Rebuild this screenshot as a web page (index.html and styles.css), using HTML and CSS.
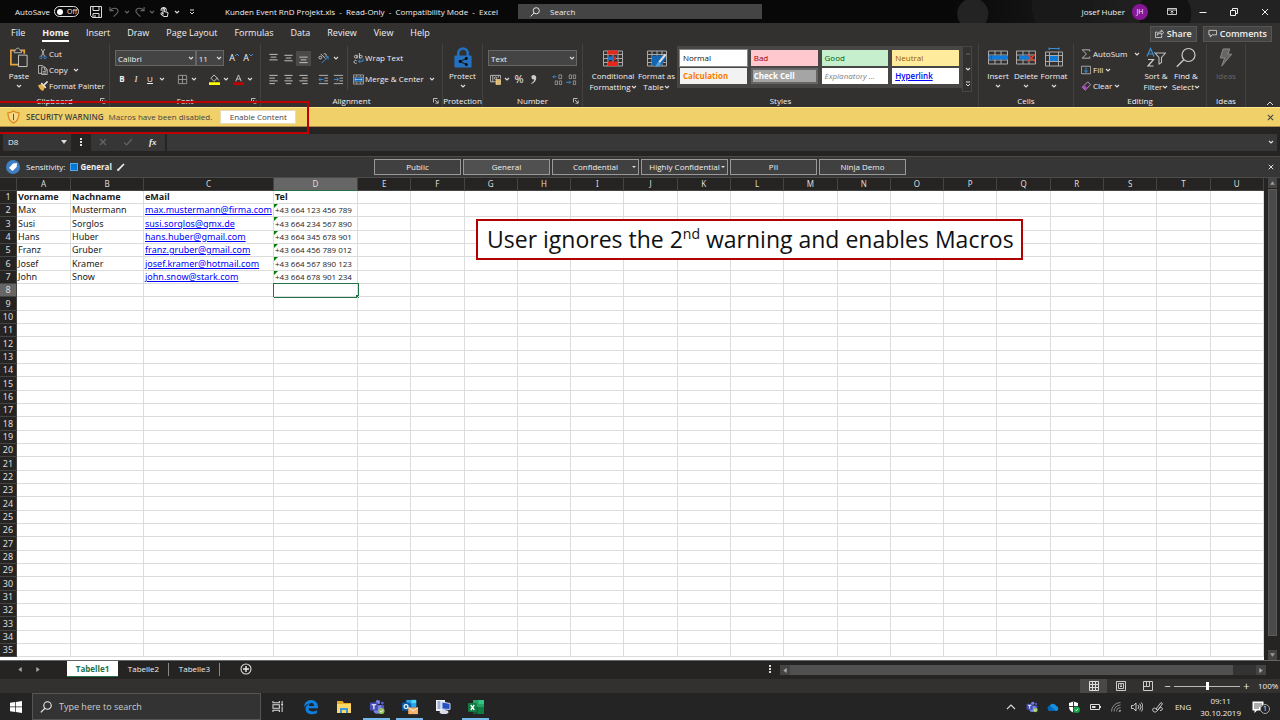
FILE: index.html
```html
<!DOCTYPE html>
<html lang="en">
<head>
<meta charset="utf-8">
<title>Kunden Event RnD Projekt.xls - Excel</title>
<link rel="stylesheet" href="styles.css">
</head>
<body>
<svg class="defs" aria-hidden="true">
  <symbol id="caret" viewBox="0 0 6 6"><path d="M1 2l2 2 2-2" fill="none" stroke="currentColor" stroke-width="1.100"/></symbol>
  <symbol id="launch" viewBox="0 0 6 6"><path d="M.5 4.500v-4h4M2 2l3 3M5.200 2.500v2.700H2.500" fill="none" stroke="currentColor" stroke-width=".9"/></symbol>
  <symbol id="glass" viewBox="0 0 12 12"><circle cx="7.500" cy="4.500" r="3.700" fill="none" stroke="currentColor" stroke-width="1.100"/><path d="M4.800 7.300L.8 11.300" stroke="currentColor" stroke-width="1.200"/></symbol>
  <symbol id="cross" viewBox="0 0 8 8"><path d="M1 1l6 6M7 1L1 7" stroke="currentColor" stroke-width="1.200"/></symbol>
  <symbol id="al-top" viewBox="0 0 12 12"><path d="M1.500 1.500h9M3 4.500h6M1.500 7.500h9" stroke="currentColor"/></symbol>
  <symbol id="al-mid" viewBox="0 0 12 12"><path d="M1.500 2.500h9M3 5.500h6M1.500 8.500h9" stroke="currentColor"/></symbol>
  <symbol id="al-bot" viewBox="0 0 12 12"><path d="M1.500 4.500h9M3 7.500h6M1.500 10.500h9" stroke="currentColor"/></symbol>
  <symbol id="teams" viewBox="0 0 18 18"><circle cx="10" cy="3.500" r="2.500" fill="#7b83eb"/><circle cx="15" cy="4.500" r="1.700" fill="#5059c9"/><path d="M12 7h5v5a3 3 0 0 1-4 2z" fill="#5059c9"/><path d="M5 7h9v5a4.500 4.500 0 0 1-9 0z" fill="#7b83eb"/><rect x="1" y="4" width="9" height="9" rx="1" fill="#464eb8"/><path d="M3 6.500h5M5.500 6.500v5" stroke="#fff" stroke-width="1.300"/><circle cx="14" cy="13.500" r="3.500" fill="#92c353"/><path d="M12.300 13.500l1.300 1.300 2.200-2.400" fill="none" stroke="#fff"/></symbol>
</svg>

<header class="titlebar">
  <div class="quick">
    <label class="autosave">AutoSave <span class="toggle"><input type="checkbox"><i></i>Off</span></label>
    <button class="qb save" aria-label="Save"><svg viewBox="0 0 12 12"><path d="M.5.5h11v11h-9l-2-2zM3 .5v4h6v-4M3 11.500v-4h6v4M5 9v2" fill="none" stroke="#ddd"/></svg></button>
    <button class="qb dim" aria-label="Undo"><svg viewBox="0 0 12 12"><path d="M1 1v4h4M1.300 4.700C4 1.500 9.500 1.500 10 5.500c.2 2-2.500 3.500-5 6" fill="none" stroke="currentColor" stroke-width="1.200"/></svg></button>
    <svg class="cv dim"><use href="#caret"/></svg>
    <button class="qb dim" aria-label="Redo"><svg viewBox="0 0 12 12"><path d="M11 1v4H7M10.700 4.700C8 1.500 2.500 1.500 2 5.500c-.2 2 2.500 3.500 5 6" fill="none" stroke="currentColor" stroke-width="1.200"/></svg></button>
    <svg class="cv dim"><use href="#caret"/></svg>
    <button class="qb" aria-label="Touch mode"><svg viewBox="0 0 12 12"><path d="M2.500 5.500a2.800 2.800 0 1 1 5.200 0M4.300 8V3.500c0-1.200 1.600-1.200 1.600 0V6l3 .8c.9.300 1 1 .8 1.800L9 11.500H5.500L2.300 8.800c-.5-.9.500-1.600 1.200-1.100L5 9" fill="none" stroke="#ddd" stroke-width="1.100"/></svg></button>
    <svg class="cv"><use href="#caret"/></svg>
    <button class="more" aria-label="Customize toolbar"><svg class="cv" viewBox="0 0 6 6"><path d="M1 1h4M1 3l2 2 2-2" fill="none" stroke="#ddd"/></svg></button>
  </div>
  <h1 class="doc">Kunden Event RnD Projekt.xls&nbsp; -&nbsp; Read-Only&nbsp; -&nbsp; Compatibility Mode&nbsp; -&nbsp; Excel</h1>
  <label class="search"><svg><use href="#glass"/></svg><input type="text" placeholder="Search" aria-label="Search"></label>
  <div class="account">
    <span>Josef Huber</span><span class="avatar">JH</span>
    <button aria-label="Ribbon display options"><svg viewBox="0 0 10 10"><path d="M.5 1.500h9v6h-9zM.5 3h9M5 7V4M3.500 5.500L5 4l1.500 1.500" fill="none" stroke="#ddd" stroke-width=".9"/></svg></button>
    <button aria-label="Minimize"><svg viewBox="0 0 10 10"><path d="M1.500 5.500h7" stroke="#eee"/></svg></button>
    <button aria-label="Restore"><svg viewBox="0 0 10 10"><path d="M1.500 3.500h5v5h-5zM3.500 3.500v-2h5v5h-2" fill="none" stroke="#eee"/></svg></button>
    <button aria-label="Close"><svg viewBox="0 0 10 10"><path d="M2 2l6 6M8 2L2 8" stroke="#eee"/></svg></button>
  </div>
</header>

<nav class="tabs">
  <a href="#">File</a><a href="#" class="on">Home</a><a href="#">Insert</a><a href="#">Draw</a><a href="#">Page Layout</a><a href="#">Formulas</a><a href="#">Data</a><a href="#">Review</a><a href="#">View</a><a href="#">Help</a>
  <div class="share">
    <button><svg viewBox="0 0 10 10"><path d="M3 3.500H.5v6h7V7M2.500 7c0-3 2-4 4.500-4V1l2.500 3L7 6.500v-2c-2 0-3.500.5-4.500 2.500z" fill="none" stroke="#ddd" stroke-width=".9"/></svg>Share</button>
    <button><svg viewBox="0 0 10 10"><path d="M1 1.500h8.500v5H4.500L2.500 9V6.500H1z" fill="none" stroke="#ddd" stroke-width=".9"/></svg>Comments</button>
  </div>
</nav>

<main class="ribbon">
  <section class="group clipboard">
    <div class="body">
      <button class="big paste"><svg viewBox="0 0 20 22"><path d="M6 3.500H1.500v15H9M12 3.500h3.500V7" fill="none" stroke="#e8a33d" stroke-width="1.800"/><path d="M5 6V3.500h1.500c0-3 4.500-3 4.500 0h1.500V6z" fill="#333130" stroke="#bbb"/><path d="M9.500 8.500h9v12h-9z" fill="#333130" stroke="#ccc"/></svg>Paste<svg class="cv"><use href="#caret"/></svg></button>
      <div class="stack">
        <button><svg viewBox="0 0 12 12"><path d="M4 0l4 9M8 0L4 9" stroke="#ccc"/><circle cx="3.500" cy="10" r="1.500" fill="none" stroke="#3a8fd6"/><circle cx="8.500" cy="10" r="1.500" fill="none" stroke="#3a8fd6"/></svg>Cut</button>
        <button><svg viewBox="0 0 12 12"><path d="M5 10H.5V.5h5L7 2M4.500 2.500h4l2.500 3v6H4.500zM8 2.500V6h3M6 8h3.500M6 9.800h3.500" fill="none" stroke="#ccc"/></svg>Copy<svg class="cv"><use href="#caret"/></svg></button>
        <button><svg viewBox="0 0 12 12"><path d="M0 5l4.500-1.500 4 4L6 12C3.500 11 1 8.500 0 5z" fill="#e8b04a"/><path d="M4 2.500l5.500 5.500" stroke="#eee" stroke-width="1.600"/><path d="M7 5l4.500-4.500" stroke="#ddd" stroke-width="2"/></svg>Format Painter</button>
      </div>
    </div>
    <h2>Clipboard</h2><svg class="launch"><use href="#launch"/></svg>
  </section>

  <section class="group font">
    <div class="rows">
      <div class="row">
        <select class="face" aria-label="Font"><option>Calibri</option></select><select class="size" aria-label="Font size"><option>11</option></select>
        <button class="ib grow" aria-label="Increase font size">A<svg viewBox="0 0 4 4"><path d="M0 3l2-2 2 2" fill="none" stroke="#3a8fd6"/></svg></button>
        <button class="ib grow" aria-label="Decrease font size">A<svg viewBox="0 0 4 4"><path d="M0 1l2 2 2-2" fill="none" stroke="#3a8fd6"/></svg></button>
      </div>
      <div class="row">
        <button class="ib"><b>B</b></button><button class="ib"><i class="it">I</i></button><button class="ib"><u>U</u></button><svg class="cv"><use href="#caret"/></svg>
        <span class="sep"></span>
        <button class="ib" aria-label="Borders"><svg viewBox="0 0 12 12"><path d="M1.500 1.500h9v9h-9zM6 1.500v9M1.500 6h9" fill="none" stroke="#999"/></svg></button><svg class="cv"><use href="#caret"/></svg>
        <span class="sep"></span>
        <button class="ib" aria-label="Fill colour"><svg viewBox="0 0 12 12"><path d="M5.500 1L2 4.500 5.500 8 9 4.500zM9 4.500l1.500 2.500" fill="none" stroke="#ccc"/><path d="M0 9h12v3H0z" fill="#ff0"/></svg></button><svg class="cv"><use href="#caret"/></svg>
        <button class="ib" aria-label="Font colour"><svg viewBox="0 0 12 12"><path d="M3 8l3-7 3 7M4 5.500h4" fill="none" stroke="#ccc"/><path d="M0 9h12v3H0z" fill="#c00000"/></svg></button><svg class="cv"><use href="#caret"/></svg>
      </div>
    </div>
    <h2>Font</h2><svg class="launch"><use href="#launch"/></svg>
  </section>

  <section class="group align">
    <div class="body">
      <div class="rows left">
        <div class="row">
          <button class="ib" aria-label="Top align"><svg><use href="#al-top"/></svg></button><button class="ib" aria-label="Middle align"><svg><use href="#al-mid"/></svg></button><button class="ib sel" aria-label="Bottom align"><svg><use href="#al-bot"/></svg></button>
          <span class="sep"></span>
          <button class="ib" aria-label="Orientation"><svg viewBox="0 0 12 12"><circle cx="2.500" cy="5" r="1.500" fill="none" stroke="#ccc"/><path d="M3 1l5 5M8 3.500a1.500 1.500 0 1 0-2-2" fill="none" stroke="#ccc"/><path d="M4 11l7-7M11 7V4H8" fill="none" stroke="#3a8fd6"/></svg></button><svg class="cv"><use href="#caret"/></svg>
        </div>
        <div class="row">
          <button class="ib" aria-label="Left"><svg viewBox="0 0 12 12"><path d="M1.500 1.500h9M1.500 4.500h6M1.500 7.500h9M1.500 10.500h6" stroke="#ccc"/></svg></button><button class="ib" aria-label="Center"><svg viewBox="0 0 12 12"><path d="M1.500 1.500h9M3 4.500h6M1.500 7.500h9M3 10.500h6" stroke="#ccc"/></svg></button><button class="ib" aria-label="Right"><svg viewBox="0 0 12 12"><path d="M1.500 1.500h9M4.500 4.500h6M1.500 7.500h9M4.500 10.500h6" stroke="#ccc"/></svg></button>
          <span class="sep"></span>
          <button class="ib" aria-label="Decrease indent"><svg viewBox="0 0 12 12"><path d="M1 1.500h10M7 4.500h4M7 7.500h4M1 10.500h10" stroke="#bbb"/><path d="M6 6H1M3 4L1 6l2 2" fill="none" stroke="#3a8fd6"/></svg></button><button class="ib" aria-label="Increase indent"><svg viewBox="0 0 12 12"><path d="M1 1.500h10M7 4.500h4M7 7.500h4M1 10.500h10" stroke="#bbb"/><path d="M1 6h5M4 4l2 2-2 2" fill="none" stroke="#3a8fd6"/></svg></button>
        </div>
      </div>
      <div class="rows right">
        <button class="row tx"><svg viewBox="0 0 12 12"><circle cx="3" cy="4" r="1.500" fill="none" stroke="#ccc"/><path d="M4.500 2v4M7 0v6M4 8.500a1.700 1.700 0 1 0 0 2.500" fill="none" stroke="#ccc"/><circle cx="8.500" cy="4" r="1.500" fill="none" stroke="#ccc"/><path d="M11 6v3H6M8 7L6 9l2 2" fill="none" stroke="#3a8fd6"/></svg>Wrap Text</button>
        <button class="row tx"><svg viewBox="0 0 12 12"><path d="M.5 1h11v10H.5zM.5 3.500h11M.5 8.500h11M4 1v2M8 1v2M4 9v2M8 9v2" fill="none" stroke="#aaa" stroke-width=".9"/><path d="M1 4h10v4H1z" fill="#1267b4"/><path d="M2 6h8M3.500 4.700L2 6l1.500 1.300M8.500 4.700L10 6 8.500 7.300" fill="none" stroke="#cde" stroke-width=".7"/></svg>Merge &amp; Center<svg class="cv"><use href="#caret"/></svg></button>
      </div>
    </div>
    <h2>Alignment</h2><svg class="launch"><use href="#launch"/></svg>
  </section>

  <section class="group protection">
    <div class="body center"><button class="big"><svg viewBox="0 0 20 22"><path d="M5 10V6.500a5 5 0 0 1 10 0V10" fill="none" stroke="#2471c1" stroke-width="2.600"/><rect x="1" y="9" width="18" height="12.500" rx="1" fill="#2471c1"/><path d="M13.500 12L7 15.200l6.500 3.200" fill="none" stroke="#222" stroke-width="1.300"/><circle cx="13.500" cy="12" r="1.500"/><circle cx="7" cy="15.200" r="1.500"/><circle cx="13.500" cy="18.400" r="1.500"/></svg>Protect<svg class="cv"><use href="#caret"/></svg></button></div>
    <h2>Protection</h2>
  </section>

  <section class="group number">
    <div class="rows">
      <div class="row"><select class="fmt" aria-label="Number format"><option>Text</option></select></div>
      <div class="row">
        <button class="ib" aria-label="Accounting format"><svg viewBox="0 0 12 12"><path d="M6 8.500H.5v-7h11V5M3 1.500v7M9 1.500V4" fill="none" stroke="#bbb"/><circle cx="6" cy="4.500" r="1.300" fill="none" stroke="#bbb"/><path d="M6.500 6h5v5.500h-5zM6.500 8h5M6.500 10h5" fill="#d9a950" stroke="#f3dba4" stroke-width=".7"/></svg></button><svg class="cv"><use href="#caret"/></svg>
        <button class="ib pct" aria-label="Percent">%</button><button class="ib" aria-label="Comma"><svg viewBox="0 0 12 12"><path d="M6 1a2.400 2.400 0 1 0 .8 4.700C6.500 8 5 9.200 3.500 10v1C7 9.800 9 7 9 4.200 9 2 7.700 1 6 1z" fill="#ccc"/></svg></button>
        <span class="sep wide"></span>
        <button class="ib" aria-label="Increase decimal"><svg viewBox="0 0 12 12"><path d="M5 3H1M2.500 1.500L1 3l1.500 1.500" fill="none" stroke="#3a8fd6"/><path d="M7.500 1h3v4h-3zM3.500 7.500h2.500v4H3.500zM8 7.500h2.500v4H8z" fill="none" stroke="#aaa" stroke-width=".8"/></svg></button>
        <button class="ib" aria-label="Decrease decimal"><svg viewBox="0 0 12 12"><path d="M0 9h5M3.500 7.500L5 9l-1.500 1.500" fill="none" stroke="#3a8fd6"/><path d="M3.500 1h2.500v4H3.500zM8 1h2.500v4H8zM8 7.500h2.500v4H8z" fill="none" stroke="#aaa" stroke-width=".8"/></svg></button>
      </div>
    </div>
    <h2>Number</h2><svg class="launch"><use href="#launch"/></svg>
  </section>

  <section class="group styles">
    <div class="body">
      <button class="big two"><svg viewBox="0 0 20 20"><path d="M.5 3.500h19v15H.5zM.5 7h19M.5 11h19M.5 15h19M5 3.500v15M10 3.500v15M15 3.500v15" fill="none" stroke="#aaa"/><path d="M5 3h10v4H5zM5 14h10v4.500H5z" fill="#e8261c"/><path d="M5 9h5v3.500H5z" fill="#1b74c8"/><path d="M10 9h3v3.500h-3z" fill="#e8261c"/></svg>Conditional<span>Formatting<svg class="cv"><use href="#caret"/></svg></span></button>
      <button class="big two"><svg viewBox="0 0 20 20"><path d="M.5 3.500h19v15H.5zM.5 7h19M.5 11h19M.5 15h19M5 3.500v15M10 3.500v15M15 3.500v15" fill="none" stroke="#aaa"/><path d="M5 8h14v3L14 18H5z" fill="#1267b4"/><path d="M18.500 7L12 15" stroke="#ddd" stroke-width="2"/><path d="M8 19c2-1 1-4 4-4.500l2 2c-.5 2.500-3.500 3-6 2.500z" fill="#4b9fe0"/></svg>Format as<span>Table<svg class="cv"><use href="#caret"/></svg></span></button>
      <div class="gallery">
        <button class="normal">Normal</button><button class="bad">Bad</button><button class="good">Good</button><button class="neutral">Neutral</button>
        <button class="calc">Calculation</button><button class="check">Check Cell</button><button class="expl">Explanatory ...</button><button class="hyper">Hyperlink</button>
      </div>
      <div class="gscroll"><button aria-label="Up"><svg class="cv dim" viewBox="0 0 6 6"><path d="M1 4l2-2 2 2" fill="none" stroke="currentColor"/></svg></button><button aria-label="Down"><svg class="cv"><use href="#caret"/></svg></button><button aria-label="More"><svg class="cv" viewBox="0 0 6 6"><path d="M1 1h4M1 3l2 2 2-2" fill="none" stroke="#ddd"/></svg></button></div>
    </div>
    <h2>Styles</h2>
  </section>

  <section class="group cells">
    <div class="body center">
      <button class="big"><svg viewBox="0 0 20 20"><path d="M.5 3.500h19v13H.5zM.5 7.500h19M.5 12.500h19M7 3.500v13M13 3.500v13" fill="none" stroke="#aaa"/><path d="M4 8h16v4H4z" fill="#0f7ad8"/><path d="M8 10H1M4 7l-3 3 3 3" fill="none" stroke="#0f7ad8" stroke-width="1.300"/></svg>Insert<svg class="cv"><use href="#caret"/></svg></button>
      <button class="big"><svg viewBox="0 0 20 20"><path d="M.5 3.500h19v13H.5zM.5 7.500h19M.5 12.500h19M7 3.500v13M13 3.500v13" fill="none" stroke="#aaa"/><path d="M3 8h10v4H3z" fill="#0f7ad8"/><path d="M11.500 7l7.500 7M19 7l-7.500 7" stroke="#e04030" stroke-width="1.400"/></svg>Delete<svg class="cv"><use href="#caret"/></svg></button>
      <button class="big"><svg viewBox="0 0 20 20"><path d="M1.500 4.500h17v14h-17zM1.500 8h17M1.500 14h17M5.500 4.500v14M14.500 4.500v14" fill="none" stroke="#aaa"/><path d="M6 8.500h8v5H6z" fill="#0f7ad8"/><path d="M5 1h10M5 0v2.500M15 0v2.500" stroke="#3a8fd6"/></svg>Format<svg class="cv"><use href="#caret"/></svg></button>
    </div>
    <h2>Cells</h2>
  </section>

  <section class="group editing">
    <div class="body">
      <div class="stack">
        <button><svg viewBox="0 0 12 12"><path d="M10.500 3V1h-9l5 5-5 5h9V9" fill="none" stroke="#ccc"/></svg>AutoSum<svg class="cv far"><use href="#caret"/></svg></button>
        <button><svg viewBox="0 0 12 12"><path d="M.5 1.500h11v9H.5z" fill="none" stroke="#bbb"/><path d="M6 3v6M3.800 6.500L6 9l2.200-2.500" fill="none" stroke="#3a8fd6" stroke-width="1.200"/></svg>Fill<svg class="cv near"><use href="#caret"/></svg></button>
        <button><svg viewBox="0 0 12 12"><path d="M8 1l3.500 3.500L5 11 1.500 7.500z" fill="#333130" stroke="#d8a8e6"/><path d="M4 5l3.500 3.500L5 11 1.500 7.500z" fill="#b146c2"/></svg>Clear<svg class="cv near"><use href="#caret"/></svg></button>
      </div>
      <button class="big two"><svg viewBox="0 0 20 20"><path d="M1 9l3.500-8L8 9M2.200 6.500h4.600" fill="none" stroke="#3a8fd6" stroke-width="1.200"/><path d="M2 12h5.500L2 18.500h5.500" fill="none" stroke="#ccc" stroke-width="1.200"/><path d="M9 5.500h10.500L15.500 10v5l-2.500 1.500V10z" fill="none" stroke="#bbb" stroke-width="1.100"/></svg>Sort &amp;<span>Filter<svg class="cv"><use href="#caret"/></svg></span></button>
      <button class="big two"><svg viewBox="0 0 20 20"><circle cx="12.500" cy="7.500" r="6.500" fill="none" stroke="#ccc" stroke-width="1.200"/><path d="M7.800 12.200L.8 19.200" stroke="#ccc" stroke-width="1.300"/></svg>Find &amp;<span>Select<svg class="cv"><use href="#caret"/></svg></span></button>
    </div>
    <h2>Editing</h2>
  </section>

  <section class="group ideas">
    <div class="body center"><button class="big" disabled><svg viewBox="0 0 20 22"><path d="M7 2h7l-2 5.500h4L5.500 20l3-8.500H4z" fill="#666" stroke="#8a8a8a"/></svg>Ideas</button></div>
    <h2>Ideas</h2>
  </section>
  <div class="collapse"><button aria-label="Collapse ribbon"><svg viewBox="0 0 8 6"><path d="M1 5l3-3 3 3" fill="none" stroke="#ddd"/></svg></button></div>
</main>

<div class="warnwrap">
  <div class="warning" role="alert">
    <svg class="shield" viewBox="0 0 14 15"><path d="M7 1C5 2.500 3 3 1 3c0 6 1.500 9 6 11 4.500-2 6-5 6-11-2 0-4-.5-6-2z" fill="#f5d98a" stroke="#dd8a1c" stroke-width="1.400"/><path d="M7 4v7" stroke="#555" stroke-width="1.100"/></svg>
    <strong>SECURITY WARNING</strong><span>Macros have been disabled.</span><button class="enable">Enable Content</button>
    <button class="close" aria-label="Close warning"><svg><use href="#cross"/></svg></button>
  </div>
  <div class="mark"></div>
</div>

<div class="formula">
  <button class="namebox">D8<svg viewBox="0 0 6 4"><path d="M0 0h6L3 4z" fill="#ddd"/></svg></button>
  <svg class="dots" viewBox="0 0 2 10"><path d="M0 1h2v2H0zM0 4h2v2H0zM0 7h2v2H0z" fill="#ddd"/></svg>
  <div class="fxs"><button aria-label="Cancel"><svg class="dim"><use href="#cross"/></svg></button><button aria-label="Enter"><svg class="dim" viewBox="0 0 8 8"><path d="M0 4.500L2.500 7 8 1" fill="none" stroke="currentColor" stroke-width="1.200"/></svg></button><button class="fx">fx</button></div>
  <label class="fin"><input type="text" aria-label="Formula"><svg class="cv"><use href="#caret"/></svg></label>
</div>

<div class="sens">
  <div class="label">
    <svg class="tag" viewBox="0 0 14 14"><circle cx="7" cy="7" r="7" fill="#3f7fc4"/><path d="M3 8l4-4.500 4-.5-.3 4L6.500 11z" fill="#fff"/></svg>
    Sensitivity:<i class="sq"></i><b>General</b>
    <svg class="pen" viewBox="0 0 8 8"><path d="M1.200 6.800L7 1" stroke="#eee" stroke-width="1.700"/><path d="M0 8l.6-2.500L2.500 7.400z" fill="#eee"/></svg>
  </div>
  <div class="levels">
    <button>Public</button><button class="cur">General</button><button>Confidential<i></i></button><button>Highly Confidential<i></i></button><button>PII</button><button>Ninja Demo</button>
  </div>
  <button class="close" aria-label="Close sensitivity bar"><svg><use href="#cross"/></svg></button>
</div>

<div class="sheet">
  <div class="grid"><table id="cells"></table>
    <p class="callout">User ignores the 2<sup>nd</sup> warning and enables Macros</p>
  </div>
  <div class="vscroll"><button aria-label="Scroll up"><svg viewBox="0 0 6 4"><path d="M0 4h6L3 0z" fill="#999"/></svg></button><i></i><button aria-label="Scroll down"><svg viewBox="0 0 6 4"><path d="M0 0h6L3 4z" fill="#999"/></svg></button></div>
</div>

<div class="sheettabs">
  <div class="arrows"><button aria-label="Previous sheet"><svg viewBox="0 0 4 6"><path d="M4 0v6L0 3z" fill="#aaa"/></svg></button><button aria-label="Next sheet"><svg viewBox="0 0 4 6"><path d="M0 0v6l4-3z" fill="#aaa"/></svg></button></div>
  <button class="st on">Tabelle1</button><button class="st">Tabelle2</button><button class="st">Tabelle3</button>
  <button class="add" aria-label="New sheet"><svg viewBox="0 0 12 12"><circle cx="6" cy="6" r="5" fill="none" stroke="#ddd" stroke-width="1.100"/><path d="M6 3v6M3 6h6" stroke="#eee" stroke-width="1.400"/></svg></button>
  <svg class="dots" viewBox="0 0 2 10"><path d="M0 1h2v2H0zM0 4h2v2H0zM0 7h2v2H0z" fill="#ddd"/></svg>
  <div class="hscroll"><button aria-label="Scroll left"><svg viewBox="0 0 4 6"><path d="M4 0v6L0 3z" fill="#aaa"/></svg></button><i></i><button aria-label="Scroll right"><svg viewBox="0 0 4 6"><path d="M0 0v6l4-3z" fill="#aaa"/></svg></button></div>
</div>

<div class="status">
  <button class="on" aria-label="Normal view"><svg viewBox="0 0 10 10"><path d="M.5.5h9v9h-9zM3.500.5v9M6.500.5v9M.5 3.500h9M.5 6.500h9" fill="none" stroke="#ddd"/></svg></button>
  <button aria-label="Page layout view"><svg viewBox="0 0 10 10"><path d="M.5.5h9v9h-9zM2.500 2.500h5v5h-5zM4 4h2M4 5.500h2" fill="none" stroke="#ccc"/></svg></button>
  <button aria-label="Page break view"><svg viewBox="0 0 10 10"><path d="M.5.5h9v9h-9zM3.500.5v5h3v-5M.5 5.500h3" fill="none" stroke="#ccc"/></svg></button>
  <span class="pm">−</span><input type="range" aria-label="Zoom" min="0" max="100" value="50"><span class="pm">+</span><span class="pct">100%</span>
</div>

<footer class="taskbar">
  <button class="start" aria-label="Start"><svg viewBox="0 0 12 12"><path d="M0 1.700L5.300 1v4.600H0zM6 .9L12 0v5.600H6zM0 6.300h5.300v4.600L0 10.200zM6 6.300h6V12l-6-.9z" fill="#fff"/></svg></button>
  <label class="tsearch"><svg><use href="#glass"/></svg><input type="text" placeholder="Type here to search" aria-label="Type here to search"></label>
  <button class="app" aria-label="Task view"><svg class="tv" viewBox="0 0 12 12"><path d="M.5 0v2h7V0M.5 4h7v4h-7zM.5 12v-2h7v2M10.500 0v3M10.500 6v6" fill="none" stroke="#ddd" stroke-width="1.100"/><path d="M9.500 3h2v2h-2z" fill="#ddd"/></svg></button>
  <button class="app" aria-label="Edge"><svg viewBox="0 0 16 16"><path d="M1 8C1.500 3 4.500 1 8 1c4.500 0 7 3 7 6.500V9.300H5.500C5.800 13 10.500 13.500 14 11.300v3C9 16.700 2.500 15 2.500 9.700 2.500 7.500 4 5.500 6.500 4.500 4.500 4.800 2.500 6 1 8zm4.700-1.100h5.400C11.100 5 10 4 8.400 4 6.800 4 5.900 5.300 5.700 6.900z" fill="#0c7fe0"/></svg></button>
  <button class="app" aria-label="File Explorer"><svg viewBox="0 0 16 16"><path d="M1 2h5.500L8 4h7v10H1z" fill="#e9a92b"/><path d="M1 5h14v9H1z" fill="#ffd869"/><path d="M4 14V9h8v5h-2v-3H6v3z" fill="#3a9ae0"/></svg></button>
  <button class="app run" aria-label="Teams"><svg><use href="#teams"/></svg></button>
  <button class="app run" aria-label="Outlook"><svg viewBox="0 0 18 18"><path d="M5 1h11v12H5z" fill="#1066b5"/><path d="M5 1h5.500v4H5zM10.500 5H16v4h-5.500z" fill="#28a8ea"/><path d="M10.500 1H16v4h-5.500z" fill="#50d9ff"/><rect y="4" width="9" height="9" rx="1" fill="#0a5ca8"/><circle cx="4.500" cy="8.500" r="2.200" fill="none" stroke="#fff" stroke-width="1.300"/><path d="M7 9.500h11V17H7z" fill="#f6b26b"/><path d="M7 9.500l5.500 4 5.500-4" fill="none" stroke="#fff" stroke-width=".8"/></svg></button>
  <button class="app" aria-label="Remote tool"><svg viewBox="0 0 16 16"><path d="M1 1h9v11H1z" fill="#eef2f8"/><path d="M2.500 3h3M2.500 5h3M2.500 7h3M2.500 9h3" stroke="#4b6cb0"/><path d="M7 3l8 1.500v6L7 10z" fill="#244fc0" stroke="#c5d4ef"/><ellipse cx="9" cy="13" rx="4.500" ry="2" fill="#d8dde6"/></svg></button>
  <button class="app run" aria-label="Excel"><svg viewBox="0 0 16 16"><path d="M5 1h11v14H5z" fill="#21a366"/><path d="M5 8h5.500v7H5z" fill="#185c37"/><path d="M10.500 8H16v7h-5.500z" fill="#107c41"/><path d="M10.500 1H16v4h-5.500z" fill="#33c481"/><rect y="4" width="9" height="9" rx="1" fill="#107c41"/><path d="M2.700 6l3.600 5M6.300 6l-3.600 5" stroke="#fff" stroke-width="1.300"/></svg></button>
  <div class="tray">
    <svg viewBox="0 0 12 12"><path d="M2 8l4-4 4 4" fill="none" stroke="#ddd" stroke-width="1.100"/></svg>
    <svg><use href="#teams"/></svg>
    <svg viewBox="0 0 12 12"><path d="M3 10a2.700 2.700 0 0 1-.3-5.300A3.600 3.600 0 0 1 9.300 5 2.600 2.600 0 0 1 9.500 10z" fill="#1490df"/><path d="M3 10a2.700 2.700 0 0 1-.3-5.300L9 10z" fill="#0364b8"/></svg>
    <svg viewBox="0 0 12 12"><path d="M5.500.5L10 2v4c0 3-2 4.500-4.500 5.500C3 10.500 1 9 1 6V2z" fill="#fff"/><path d="M5.500.5v11M1 5.500h9" stroke="#333"/><circle cx="8.700" cy="8.700" r="3.200" fill="#16a34a"/><path d="M7.300 8.700l1 1 1.800-2" fill="none" stroke="#fff" stroke-width=".9"/></svg>
    <svg viewBox="0 0 12 12"><path d="M1.500 3.500h9v5h-9z" fill="none" stroke="#ddd"/><path d="M3 5h3.500v2H3zM11 5h1v2h-1z" fill="#ddd"/></svg>
    <svg viewBox="0 0 12 12"><path d="M10.500 1.500a9 9 0 0 0-9 9M10.500 4a6.500 6.500 0 0 0-6.500 6.500M10.500 6.500a4 4 0 0 0-4 4" fill="none" stroke="#888"/><path d="M10.500 8.500v2h-2z" fill="#eee"/></svg>
    <svg viewBox="0 0 12 12"><path d="M.5 4.500h2L5 2v8L2.500 7.500h-2zM7 4a3 3 0 0 1 0 4M8.700 2.700a5 5 0 0 1 0 6.600M10.300 1.500a7 7 0 0 1 0 9" fill="none" stroke="#ddd" stroke-width=".9"/></svg>
    <svg viewBox="0 0 12 12"><path d="M4 8l5-6.500 1.500 1.200L5.500 9.500zM4 8c-3-3-5 2-1.500 3 3.500.5 3-4 6-4.500 3-.3 2 3.500-.5 3" fill="none" stroke="#ddd" stroke-width=".9"/></svg>
    <span>ENG</span>
    <time><span>09:11</span><span>30.10.2019</span></time>
    <span class="notif"><svg viewBox="0 0 12 12"><path d="M.5.500h11v9H5L2.500 12V9.500h-2z" fill="#fff"/><path d="M2 3h8M2 5h8M2 7h5" stroke="#333" stroke-width=".8"/></svg><em>1</em></span>
  </div>
</footer>
<script src="sheet.js"></script>
</body>
</html>
```
FILE: styles.css
```css
* { box-sizing: border-box; }
body { margin: 0; height: 100vh; display: flex; flex-direction: column; overflow: hidden; background: #252423; color: #f0f0f0; font: 8px/12px "Open Sans", "Noto Sans", sans-serif; }
button, input, select { font: inherit; color: inherit; background: none; border: 0; padding: 0; margin: 0; border-radius: 0; }
button { display: flex; align-items: center; justify-content: center; white-space: nowrap; }
h1, h2, p { margin: 0; font: inherit; }
svg { flex: none; display: block; width: 12px; height: 12px; }
.defs { display: none; }
.cv { width: 6px; height: 6px; margin: 0 2px; color: #ddd; }
.dim { color: #666; }

.titlebar { height: 23px; flex: none; display: grid; grid-template-columns: 1fr 244px 1fr; grid-template-areas: "quick search account"; align-items: center; position: relative; background: radial-gradient(circle at 76% 60%, #242323 15px, transparent 16px), radial-gradient(circle at 83% 30%, #1a1919 30px, transparent 31px), radial-gradient(circle at 91% 60%, #141313 26px, transparent 27px), linear-gradient(90deg, #080808 74%, #232222 90%); }
.quick { display: flex; align-items: center; padding-left: 15px; grid-area: quick; }
.autosave, .toggle { display: flex; align-items: center; }
.autosave { width: 73px; gap: 4px; }
.toggle { width: 25px; height: 11px; flex: none; border: 1px solid #ddd; border-radius: 6px; font-size: 7px; gap: 4px; padding-left: 2px; }
.toggle input { position: absolute; opacity: 0; width: 1px; height: 1px; }
.toggle i { width: 6px; height: 6px; border-radius: 3px; background: #fff; }
.qb { width: 15px; }
.qb svg { width: 11px; height: 11px; }
.qb.save svg { width: 12px; height: 12px; }
.qb.save { margin-right: 4px; }
.more { margin-left: 5px; }
.doc { position: absolute; left: 225px; white-space: nowrap; }
.search { grid-area: search; height: 15px; background: #444; display: flex; align-items: center; padding: 0 12px; gap: 10px; }
.search svg { width: 10px; height: 10px; }
.search input, .tsearch input { flex: 1; min-width: 0; outline: 0; }
.search input::placeholder { color: #eee; opacity: 1; }
.account { grid-area: account; display: flex; align-items: center; justify-content: flex-end; }
.avatar { width: 16px; height: 16px; border-radius: 8px; background: #881798; text-align: center; line-height: 16px; margin: 0 8px 0 7px; font-size: 7px; }
.account button { width: 31px; }
.account button svg { width: 10px; height: 10px; }

.tabs { height: 21px; flex: none; display: flex; align-items: center; gap: 17px; padding: 0 8px 0 11px; background: #333130; font-size: 9px; }
.tabs a { color: #f0f0f0; text-decoration: none; line-height: 14px; border-bottom: 2px solid transparent; }
.tabs a.on { font-weight: 700; border-color: #fff; }
.share { margin-left: auto; display: flex; gap: 6px; font-weight: 600; }
.share button { height: 16px; background: #444; border: 1px solid #555; gap: 3px; padding: 0 4px; }
.share svg { width: 9px; height: 9px; }

.ribbon { height: 63px; flex: none; display: flex; background: #333130; }
.group { position: relative; flex: none; display: flex; flex-direction: column; border-right: 1px solid #444240; padding-top: 2px; }
.group h2 { margin-top: auto; text-align: center; height: 12px; }
.launch { position: absolute; right: 3px; bottom: 3px; width: 6px; height: 6px; color: #ccc; }
.body { display: flex; }
.center { justify-content: center; }
.big { flex-direction: column; justify-content: flex-start; width: 28px; line-height: 11px; }
.big > svg:first-child { width: 20px; height: 21px; margin: 1px 0 2px; }
.big > .cv { margin-top: 2px; }
.big span { display: flex; align-items: center; }
.big span .cv { margin: 0; }
.big:disabled { color: #666; }
.stack button { height: 16px; gap: 2px; }
.stack svg:first-child { width: 10px; height: 10px; }
.stack .cv { margin-left: 4px; }
.rows { display: flex; flex-direction: column; gap: 5px; padding: 4px 5px 0; }
.row { display: flex; align-items: center; justify-content: flex-start; height: 16px; }
.ib { width: 14px; height: 15px; flex: none; }
.ib svg { width: 11px; height: 11px; color: #ccc; }
.sep { width: 1px; height: 13px; background: #484644; margin: 0 4px; }
.it { font-family: "Liberation Serif", serif; font-size: 9px; }
select { appearance: none; height: 16px; border: 1px solid #666; background: #444 url("data:image/svg+xml,%3Csvg xmlns='http://www.w3.org/2000/svg' viewBox='0 0 6 6'%3E%3Cpath d='M1 2l2 2 2-2' fill='none' stroke='%23ddd' stroke-width='1.1'/%3E%3C/svg%3E") no-repeat right 1px center / 6px 6px; padding: 0 2px; line-height: 13px; }
.face { width: 83px; } .size { width: 29px; margin-right: 3px; } .fmt { width: 90px; }
.ib.grow { font-size: 9px; }
.ib.grow svg { width: 4px; height: 4px; margin-bottom: 6px; }
.clipboard { width: 110px; } .paste { width: 38px; }
.clipboard .stack button { gap: 1px; }
.font { width: 151px; }
.align { width: 182px; } .align .ib { width: 15px; }
.left { width: 87px; border-right: 1px solid #484644; padding-right: 0; height: 44px; }
.left .sep { margin: 0 2px; background: none; }
.right { padding-right: 0; }
.sel { background: #4c4a48; }
.tx { gap: 1px; }
.tx svg:first-child { width: 11px; height: 11px; }
.tx .cv { margin-left: 4px; }
.protection { width: 40px; } .protection .big { width: 38px; } .protection h2 { white-space: nowrap; }
.number { width: 100px; }
.number .pct { font-size: 11px; }
.number .wide { margin: 0 5px; }
.styles { flex: 1; min-width: 0; }
.styles .body { padding-left: 7px; }
.styles .two { width: 46px; }
.styles .two + .two { width: 41px; }
.gallery { flex: 1; display: grid; grid-template-columns: repeat(4, 1fr); grid-template-rows: 16px 16px; gap: 2px 4px; background: #484644; padding: 4px 3px; height: 42px; }
.gallery button { justify-content: flex-start; padding: 0 3px; background: #fff; color: #111; overflow: hidden; }
.gallery .normal { outline: 1px solid #888; }
.gallery .bad { background: #ffc7ce; color: #9c0006; }
.gallery .good { background: #c6efce; color: #006100; }
.gallery .neutral { background: #ffeb9c; color: #9c5700; }
.gallery .calc { background: #f2f2f2; color: #fa7d00; font-weight: 700; }
.gallery .check { background: #a5a5a5; color: #fff; font-weight: 700; border: 2px solid #666; padding: 0 1px; }
.gallery .expl { color: #7f7f7f; font-style: italic; }
.gallery .hyper { color: #0000ff; text-decoration: underline; font-weight: 600; }
.gscroll { width: 10px; margin-right: 6px; display: grid; grid-template-rows: repeat(3, 1fr); border: 1px solid #484644; }
.cells { width: 95px; } .cells .big { width: 28px; }
.editing { width: 133px; } .editing .body { padding-left: 7px; } .editing .stack { width: 60px; } .editing .two { width: 30px; }
.stack .far { margin-left: 5px; }
.stack .near { margin-left: 0; }
.ideas { width: 39px; }
.collapse { width: 34px; display: flex; align-items: flex-end; justify-content: flex-end; padding: 0 6px 1px 0; }
.collapse svg { width: 8px; height: 6px; }

.warnwrap { position: relative; flex: none; padding-bottom: 5px; }
.warning { height: 20px; display: flex; align-items: center; background: #f0d068; border-top: 1px solid #ffe48a; border-bottom: 1px solid #b08a48; color: #444; padding-left: 7px; }
.shield { width: 13px; height: 14px; margin-right: 6px; }
.warning strong { font-weight: 600; margin-right: 5px; }
.enable { margin-left: 8px; width: 76px; height: 14px; background: #fff; border: 1px solid #e6dcb8; }
.close { margin-left: auto; width: 20px; }
.close svg { width: 7px; height: 7px; }
.mark { position: absolute; left: 0; top: -6px; width: 309px; height: 33px; border: 2px solid #c00000; border-left: 0; }

.formula { flex: none; display: flex; align-items: center; height: 20px; padding: 0 3px; }
.namebox { width: 68px; height: 17px; background: #363636; justify-content: space-between; padding: 0 4px 0 5px; }
.namebox svg { width: 6px; height: 4px; }
.dots { width: 2px; height: 10px; margin: 0 9px; }
.fxs { display: flex; width: 74px; height: 17px; background: #363636; justify-content: space-around; }
.fxs svg { width: 8px; height: 8px; }
.fx { font: italic bold 9px "Liberation Serif", serif; }
.fin { flex: 1; display: flex; align-items: center; height: 17px; background: #383838; margin-left: 2px; padding-right: 1px; }
.fin input { flex: 1; outline: 0; min-width: 0; }

.sens { flex: none; display: grid; grid-template-columns: 1fr auto 1fr; align-items: center; height: 22px; margin-top: 4px; background: #363636; border: solid #4a4a4a; border-width: 1px 0; }
.label { display: flex; align-items: center; padding-left: 6px; }
.tag { width: 14px; height: 14px; margin-right: 6px; }
.sq { width: 8px; height: 8px; background: #0078d7; border: 1px solid #5aa9e6; margin: 0 2px 0 5px; }
.pen { width: 8px; height: 8px; margin-left: 5px; }
.levels { display: grid; grid-template-columns: repeat(6, 87px); gap: 2px; }
.levels button { position: relative; height: 16px; border: 1px solid #999; background: #404040; }
.levels .cur { background: #505050; }
.levels i { position: absolute; right: 2px; top: 6px; border: 2px solid transparent; border-top-color: #ddd; }
.sens .close { justify-self: end; width: 18px; }
.sens .close svg { width: 6px; height: 6px; }

.sheet { flex: 1; min-height: 0; display: flex; }
.grid { position: relative; flex: 1; min-width: 0; overflow: hidden; background: #fff; }
table { border-collapse: separate; border-spacing: 0; table-layout: fixed; width: 100%; color: #222; font-family: "Noto Sans", "Open Sans", sans-serif; font-size: 9px; line-height: 12px; }
th, td { padding: 0; height: 13px; white-space: nowrap; overflow: visible; border: solid #dcdcdc; border-width: 0 1px 1px 0; }
tr:nth-child(3n) td, tr:nth-child(3n) th { height: 14px; }
td { padding-left: 1px; text-align: left; position: relative; }
th { background: #252423; color: #ddd; font-weight: 400; border-color: #444; font-size: 8px; }
thead th { height: 13px; }
thead th.cur { background: #666; border-bottom-color: #217346; }
tbody th.cur { background: #666; }
tbody th { font-size: 9px; }
td a { color: #0000ff; }
td.tel { font-family: "Open Sans", sans-serif; font-size: 8px; }
td.tel::before { content: ""; position: absolute; left: 0; top: 0; border: 2px solid; border-color: #008000 transparent transparent #008000; }
td.active { outline: 1px solid #217346; }
td.active::after { content: ""; position: absolute; right: -2px; bottom: -2px; width: 3px; height: 3px; background: #217346; }
.w0 { width: 17px; } .w1 { width: 54px; } .w2 { width: 73px; } .w3 { width: 130px; } .w4 { width: 84px; }
.callout { position: absolute; left: 476px; top: 41px; height: 41px; padding: 0 7px 0 9px; border: 2px solid #b00000; background: #fff; color: #111; font-size: 23px; line-height: 37px; white-space: nowrap; }
.callout sup { font-size: 14px; line-height: 0; }
.vscroll { width: 16px; padding: 0 3px 0 4px; display: flex; flex-direction: column; }
.vscroll button { height: 10px; background: #444; }
.vscroll svg { width: 5px; height: 4px; }
.vscroll i { flex: 1; background: #4a4a4a; margin: 1px 0 14px; border: 1px solid #5a5a5a; }

.sheettabs { flex: none; height: 19px; display: flex; align-items: flex-start; border-top: 1px solid #666; }
.arrows { display: flex; width: 67px; padding-left: 16px; gap: 10px; height: 17px; }
.arrows button { width: 8px; } .arrows svg, .hscroll svg { width: 4px; height: 5px; }
.st { width: 51px; height: 16px; position: relative; }
.st.on { background: #fff; color: #217346; font-weight: 700; border-bottom: 1px solid #217346; }
.st:not(.on)::after { content: ""; position: absolute; right: 0; top: 2px; height: 13px; width: 1px; background: #888; }
.add { margin: 2px auto 0 20px; }
.sheettabs .dots { margin: 3px 9px 0; height: 10px; }
.hscroll { width: 38%; height: 10px; margin: 4px 14px 0 0; display: flex; background: #333; }
.hscroll button { width: 10px; background: #444; }
.hscroll i { flex: 1; background: #505050; margin-right: 23px; }

.status { flex: none; height: 14px; display: flex; align-items: center; justify-content: flex-end; background: #333130; padding-right: 4px; }
.status button { width: 27px; height: 14px; }
.status svg { width: 10px; height: 10px; }
.status .on { background: #4a4846; }
.status .pm { width: 13px; text-align: center; font-size: 11px; }
.status .pct { margin-left: 5px; width: 18px; white-space: nowrap; }
.status input { appearance: none; width: 66px; height: 10px; background: linear-gradient(#bbb, #bbb) no-repeat center / 100% 1px; }
.status input::-webkit-slider-thumb { appearance: none; width: 3px; height: 8px; background: #fff; }

.taskbar { flex: none; height: 27px; display: flex; align-items: center; background: #242424; }
.start { width: 32px; }
.tsearch { width: 229px; height: 27px; border: 1px solid #555; background: #333; display: flex; align-items: center; padding: 0 7px; gap: 7px; font-size: 9px; }
.tsearch input::placeholder { color: #ccc; opacity: 1; }
.app { width: 33px; height: 27px; }
.app svg { width: 16px; height: 16px; }
.app .tv { width: 12px; height: 11px; }
.run { background: linear-gradient(#76b9ed, #76b9ed) no-repeat center bottom / 27px 2px; }
.tray { margin-left: auto; display: flex; align-items: center; gap: 9px; padding-right: 10px; }
.tray > span { margin-left: 2px; }
time { display: flex; flex-direction: column; align-items: center; }
.notif { position: relative; padding-right: 6px; }
.notif em { position: absolute; right: 0; top: 3px; width: 10px; height: 10px; border: 1px solid #aaa; border-radius: 5px; background: #242424; font: 7px/8px "Open Sans", sans-serif; text-align: center; }
```
FILE: sheet.js
```js
const columns = "ABCDEFGHIJKLMNOPQRSTU".split("");
const people = [
  ["Vorname", "Nachname", "eMail", "Tel"],
  ["Max", "Mustermann", "max.mustermann@firma.com", "+43 664 123 456 789"],
  ["Susi", "Sorglos", "susi.sorglos@gmx.de", "+43 664 234 567 890"],
  ["Hans", "Huber", "hans.huber@gmail.com", "+43 664 345 678 901"],
  ["Franz", "Gruber", "franz.gruber@gmail.com", "+43 664 456 789 012"],
  ["Josef", "Kramer", "josef.kramer@hotmail.com", "+43 664 567 890 123"],
  ["John", "Snow", "john.snow@stark.com", "+43 664 678 901 234"]
];

function cell(row, col) {
  const text = (people[row] || [])[col] || "";
  if (row === 0 && text) return `<td><b>${text}</b></td>`;
  if (row === 7 && col === 3) return '<td class="active"></td>';
  if (text && col === 2) return `<td><a href="mailto:${text}">${text}</a></td>`;
  if (text && col === 3) return `<td class="tel">${text}</td>`;
  return `<td>${text}</td>`;
}

const head = columns.map((c, i) => `<th class="w${i + 1} ${c === "D" ? "cur" : ""}">${c}</th>`).join("");
const rows = Array.from({ length: 35 }, (_, r) =>
  `<tr><th class="${r === 7 ? "cur" : ""}">${r + 1}</th>${columns.map((_, c) => cell(r, c)).join("")}</tr>`).join("");
document.getElementById("cells").innerHTML =
  `<thead><tr><th class="w0"></th>${head}</tr></thead><tbody>${rows}</tbody>`;
```
